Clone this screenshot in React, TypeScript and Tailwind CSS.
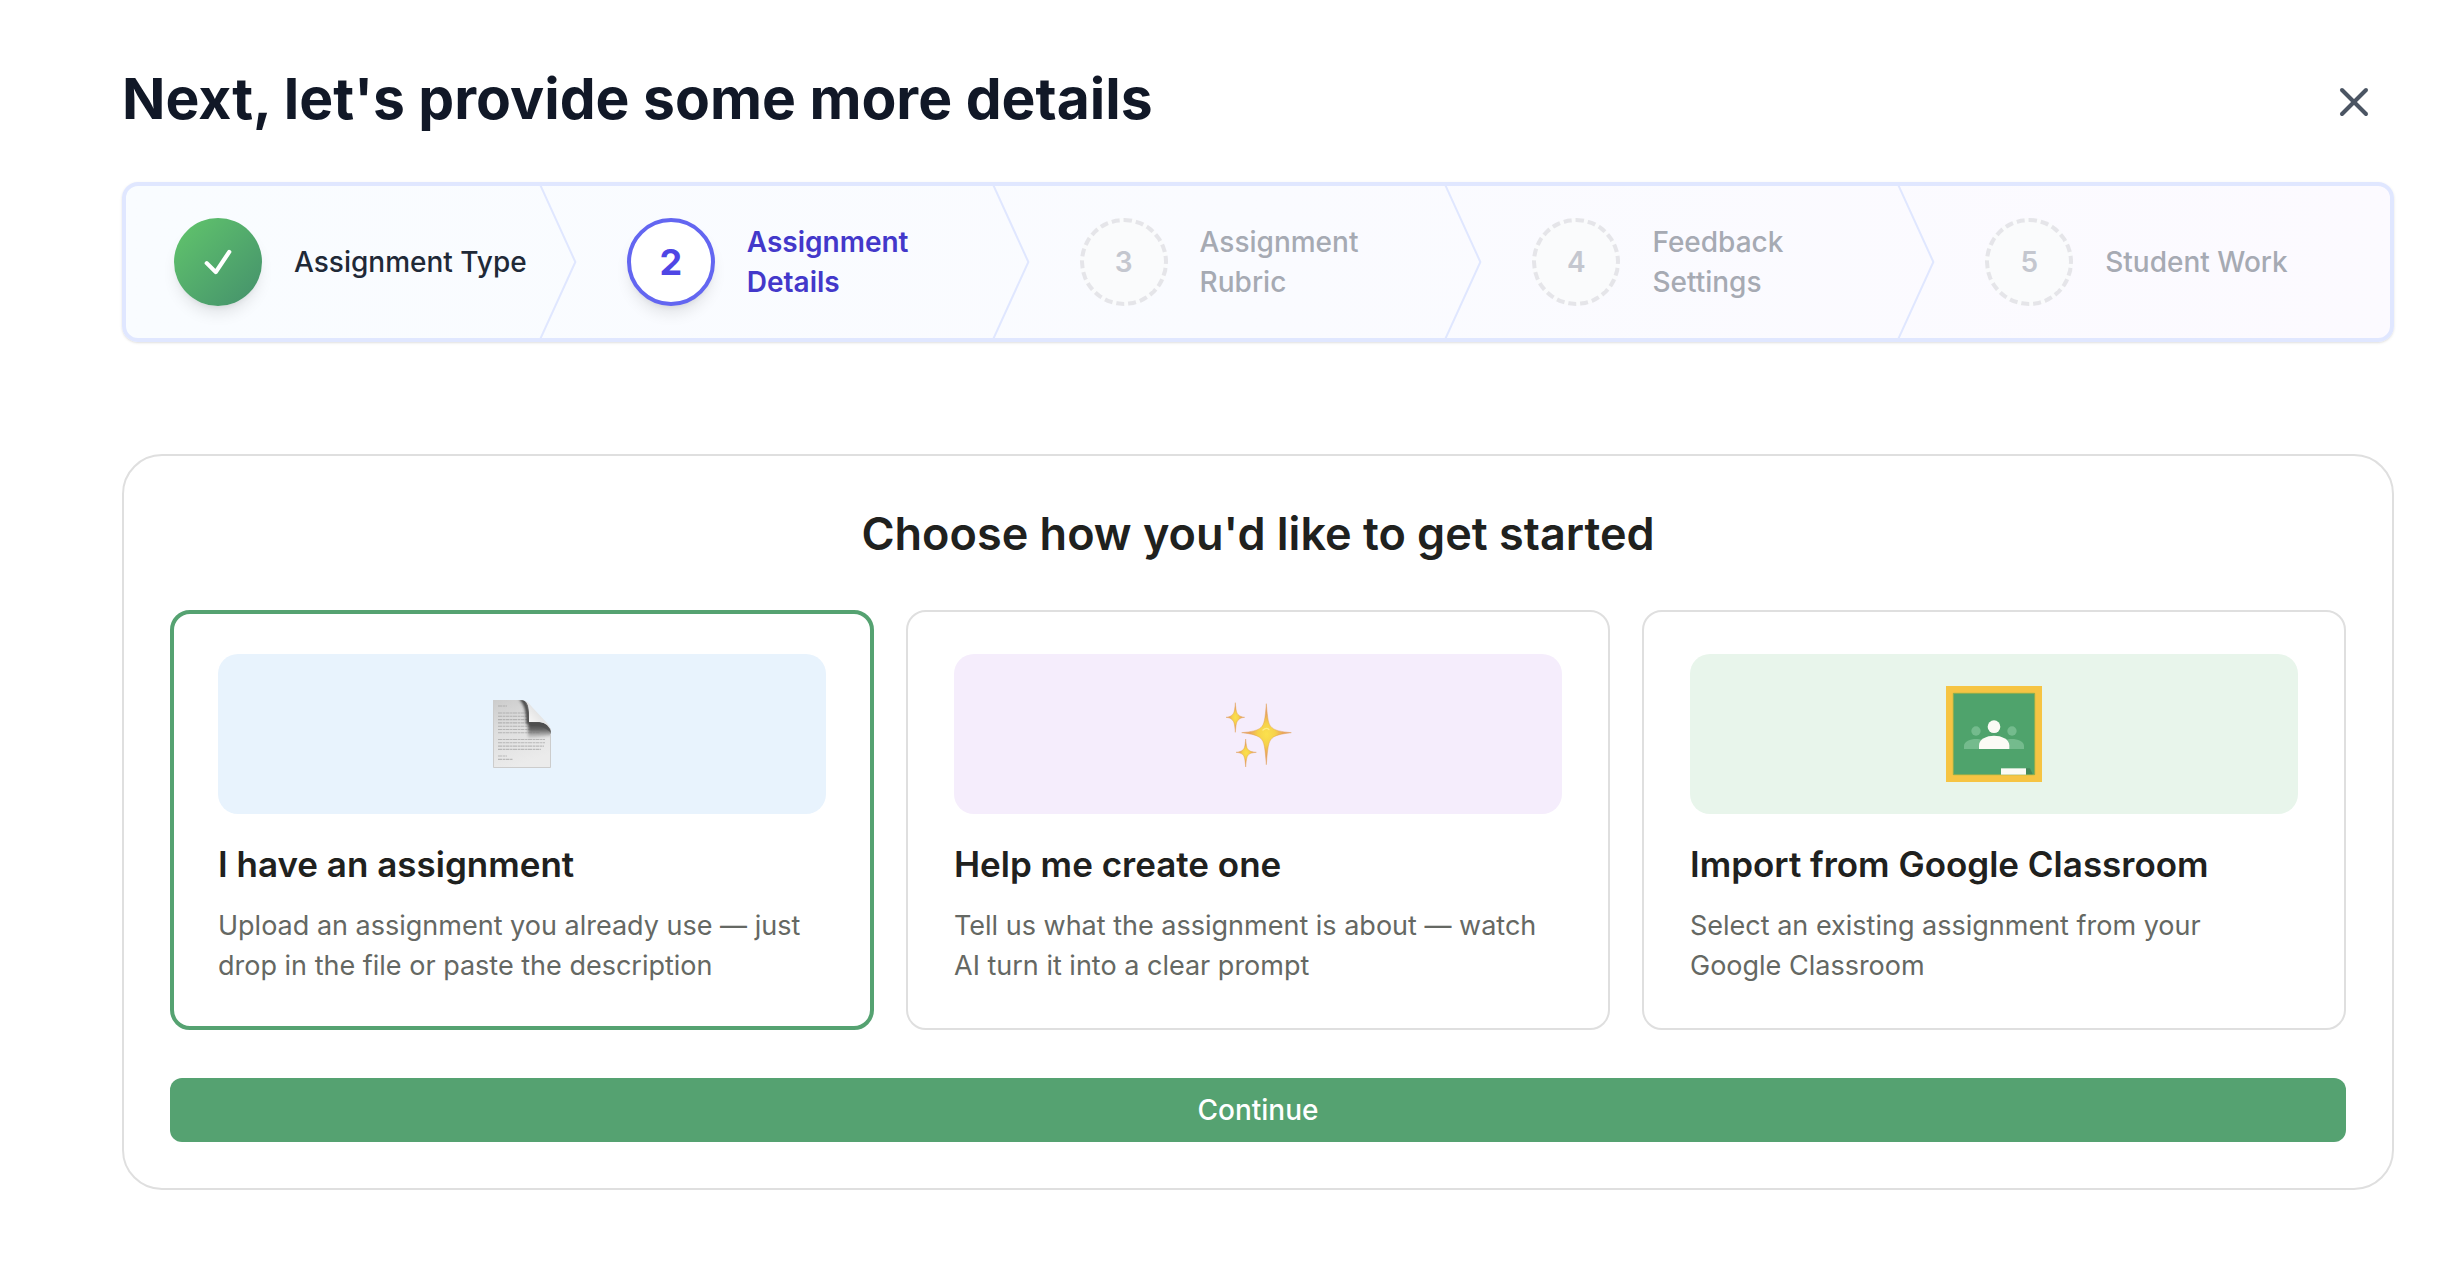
import { useState } from 'react';
import { X } from 'lucide-react';
import clsx from 'clsx';

type StepStatus = 'complete' | 'current' | 'upcoming';

type Step = {
  label: string;
  status: StepStatus;
};

const steps: Step[] = [
  { label: 'Assignment Type', status: 'complete' },
  { label: 'Assignment Details', status: 'current' },
  { label: 'Assignment Rubric', status: 'upcoming' },
  { label: 'Feedback Settings', status: 'upcoming' },
  { label: 'Student Work', status: 'upcoming' },
];

const circleStyles: Record<StepStatus, string> = {
  complete: 'bg-linear-to-br from-[#62c66b] to-[#44906b] shadow-lg',
  current: 'border-4 border-[#6366f1] bg-white text-4xl font-bold text-[#4f46e5] shadow-lg',
  upcoming: 'border-4 border-dashed border-[#e5e5e9] bg-[#fafbfc] text-[28px] font-semibold text-[#c4c7cf]',
};

const labelStyles: Record<StepStatus, string> = {
  complete: 'font-medium text-[#1f2937]',
  current: 'font-semibold text-[#4338ca]',
  upcoming: 'font-medium text-[#a6aab3]',
};

function CheckIcon() {
  return (
    <svg viewBox="0 0 24 24" className="size-9" fill="none" stroke="white" strokeWidth="2.8" strokeLinecap="round" strokeLinejoin="round" aria-hidden="true">
      <path d="m4.5 12.75 6 6 9-13.5" />
    </svg>
  );
}

function DocumentIcon() {
  const lines = [
    [5, 6, 9], [5, 13, 29], [5, 16.3, 29], [5, 19.6, 30], [5, 22.9, 31], [5, 26.2, 42], [5, 29.5, 45],
    [5, 32.8, 42], [5, 39.5, 47], [5, 42.8, 47], [5, 46.1, 46], [5, 49.4, 43], [5, 56, 9], [5, 59.4, 15],
  ];
  return (
    <svg viewBox="0 0 58 68" className="h-17 w-[58px]" aria-hidden="true">
      <defs>
        <linearGradient id="paper" x1="0" y1="0" x2="0.3" y2="1">
          <stop offset="0" stopColor="#cccccc" />
          <stop offset="0.45" stopColor="#dedede" />
          <stop offset="1" stopColor="#ebebeb" />
        </linearGradient>
        <linearGradient id="fold" x1="0" y1="1" x2="0.6" y2="0.4">
          <stop offset="0" stopColor="#cfcfcf" />
          <stop offset="0.5" stopColor="#f4f4f4" />
          <stop offset="1" stopColor="#e2e2e2" />
        </linearGradient>
        <linearGradient id="shade" x1="0" y1="0" x2="0" y2="1">
          <stop offset="0" stopColor="#333333" />
          <stop offset="0.5" stopColor="#666666" />
          <stop offset="1" stopColor="#8a8a8a" stopOpacity="0.2" />
        </linearGradient>
        <filter id="soft" x="-50%" y="-50%" width="200%" height="200%">
          <feGaussianBlur stdDeviation="1.6" />
        </filter>
        <clipPath id="sheet">
          <path d="M0 0H28C34 0 36 5 36 12V22H45C53 22 58 26 58 33V68H0Z" />
        </clipPath>
      </defs>
      <g clipPath="url(#sheet)">
        <path d="M0 0H58V68H0Z" fill="url(#paper)" />
        {lines.map(([x, y, w]) => (
          <path key={y} d={`M${x} ${y}h${w}`} stroke="#8c8c8c" strokeWidth="1.1" strokeDasharray="4 0.6 2.4 0.5" opacity="0.5" />
        ))}
        <path d="M28 -2C33 3 35 8 35.5 24" fill="none" stroke="#3a3a3a" strokeWidth="4" filter="url(#soft)" />
        <path d="M35 21H60V35C50 36 42 38 35 38Z" fill="url(#shade)" filter="url(#soft)" />
        <path d="M36 22H45C53 22 58 26 58 33C54 28 46 25 36 25Z" fill="#505050" opacity="0.7" />
        <path d="M0.5 0V67.5H57.5V34" fill="none" stroke="#cccccc" />
      </g>
      <path d="M29 0C33 0 36 3 39 7L54 23C56 25 57 27 58 31C55 24 50 22 45 22H36V12C36 5 34 0 29 0Z" fill="url(#fold)" />
    </svg>
  );
}

function SparklesIcon() {
  return (
    <svg viewBox="72 60 204 204" className="size-17" aria-hidden="true">
      <defs>
        <radialGradient id="spark">
          <stop offset="0" stopColor="#fbe14d" />
          <stop offset="0.35" stopColor="#f6d24a" />
          <stop offset="0.65" stopColor="#eaa75c" />
          <stop offset="1" stopColor="#e5a287" />
        </radialGradient>
      </defs>
      <g fill="url(#spark)" stroke="#dd9a45" strokeOpacity="0.6" strokeWidth="2" strokeLinejoin="round">
        <path d="M199 71C203 118 205 134 216 143C225 151 242 155 274 158C242 162 225 166 216 175C205 185 203 204 199 254C195 204 193 185 182 175C173 166 156 162 125 158C156 155 173 151 182 143C193 134 195 118 199 71Z" />
        <path d="M106 68C108 94 110 100 116 105C120 109 125 111 134 112C125 113 120 115 116 119C110 124 108 131 106 157C104 131 102 124 96 119C92 115 87 113 78 112C87 111 92 109 96 105C102 100 104 94 106 68Z" />
        <path d="M137 177C139 201 141 207 147 211C151 214 157 216 169 217C157 218 151 220 147 223C141 227 139 236 137 261C135 236 133 227 127 223C123 220 118 218 108 217C118 216 123 214 127 211C133 207 135 201 137 177Z" />
      </g>
      <path d="M189 150C196 144 203 144 207 149" fill="none" stroke="#fff3a0" strokeWidth="4" strokeLinecap="round" opacity="0.7" />
    </svg>
  );
}

function ClassroomIcon() {
  return (
    <svg viewBox="0 0 288 288" className="size-24" aria-hidden="true">
      <path d="M0 0H288V288H0Z" fill="#f6c443" />
      <path d="M22 22H266V266H22Z" fill="#4fa36c" stroke="#8fae4c" strokeWidth="3" />
      <g fill="#74bb8d">
        <circle cx="90" cy="135" r="14" />
        <circle cx="198" cy="135" r="14" />
        <path d="M54 189V180C54 166 73 159 90 159C97 159 104 160 110 163L98 189Z" />
        <path d="M234 189V180C234 166 215 159 198 159C191 159 184 160 178 163L190 189Z" />
      </g>
      <g fill="#fbfbf5">
        <circle cx="144" cy="122" r="19" />
        <path d="M99 189V178C99 159 122 149 144 149C166 149 190 159 190 178V189Z" />
        <path d="M165 247H240V266H165Z" />
      </g>
      <path d="M240 247H252L260 265H240Z" fill="#43875a" />
    </svg>
  );
}

const options = [
  {
    id: 'upload',
    title: 'I have an assignment',
    description: 'Upload an assignment you already use — just drop in the file or paste the description',
    tile: 'bg-[#e8f3fd]',
    icon: <DocumentIcon />,
  },
  {
    id: 'create',
    title: 'Help me create one',
    description: 'Tell us what the assignment is about — watch AI turn it into a clear prompt',
    tile: 'bg-[#f5edfc]',
    icon: <SparklesIcon />,
  },
  {
    id: 'import',
    title: 'Import from Google Classroom',
    description: 'Select an existing assignment from your Google Classroom',
    tile: 'bg-[#e8f5eb]',
    icon: <ClassroomIcon />,
  },
];

function Stepper() {
  return (
    <nav aria-label="Progress">
      <ol className="grid grid-cols-5 overflow-hidden rounded-2xl border-4 border-[#e0e7ff] bg-linear-to-r from-[#f9fcff] via-[#fafbff] to-[#fcfaff] shadow-sm">
        {steps.map((step, i) => (
          <li
            key={step.label}
            aria-current={step.status === 'current' ? 'step' : undefined}
            className="relative flex items-center gap-8 px-12 py-8"
          >
            <span className={clsx('flex size-22 shrink-0 items-center justify-center rounded-full', circleStyles[step.status])}>
              {step.status === 'complete' ? <CheckIcon /> : i + 1}
            </span>
            <span className={clsx('text-[28px] leading-10', labelStyles[step.status])}>{step.label}</span>
            {/* Separator */}
            {i < steps.length - 1 && (
              <svg
                viewBox="0 0 22 80"
                preserveAspectRatio="none"
                fill="none"
                className="absolute top-0 right-0 h-full w-10 text-[#e0e7ff]"
                aria-hidden="true"
              >
                <path d="M0 -2L20 40L0 82" stroke="currentColor" strokeWidth="2" vectorEffect="non-scaling-stroke" />
              </svg>
            )}
          </li>
        ))}
      </ol>
    </nav>
  );
}

export default function App() {
  const [selected, setSelected] = useState('upload');

  return (
    <main className="min-h-screen bg-white pt-16 pr-16 pb-16 pl-[122px] font-['Inter',sans-serif]">
      <header className="mb-12 flex items-center justify-between pr-4">
        <h1 className="text-[57px] leading-[70px] font-bold text-[#111827]">Next, let's provide some more details</h1>
        <button type="button" aria-label="Close" className="mt-1.5 text-[#4b5563]">
          <X className="size-12" />
        </button>
      </header>

      <Stepper />

      <section className="mt-28 rounded-[40px] border-2 border-[#dfdfdf] p-[46px]">
        <h2 className="mb-11 text-center text-[45px] leading-16 font-semibold text-[#20211e]">
          Choose how you'd like to get started
        </h2>

        <div className="grid grid-cols-3 gap-8">
          {options.map((option) => (
            <button
              key={option.id}
              type="button"
              aria-pressed={selected === option.id}
              onClick={() => setSelected(option.id)}
              className={clsx(
                'flex flex-col rounded-[20px] text-left',
                selected === option.id ? 'border-4 border-[#55a271] px-11 py-10' : 'border-2 border-[#dfdfdf] px-[46px] py-[42px]'
              )}
            >
              <span className={clsx('flex h-40 w-full items-center justify-center rounded-[20px]', option.tile)}>{option.icon}</span>
              <span className="mt-6 mb-4 text-[35px] leading-[52px] font-semibold text-[#20211e]">{option.title}</span>
              <span className="text-[27px] leading-10 text-[#656863]">{option.description}</span>
            </button>
          ))}
        </div>

        <button type="button" className="mt-12 h-16 w-full rounded-xl bg-[#55a271] text-[28px] font-medium text-white">
          Continue
        </button>
      </section>
    </main>
  );
}
